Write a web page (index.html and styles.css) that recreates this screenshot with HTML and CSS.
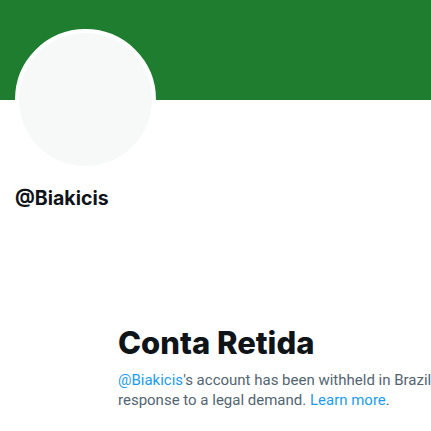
FILE: index.html
```html
<!DOCTYPE html>
<html>
<head>
<meta charset="utf-8">
<link rel="stylesheet" href="styles.css">
</head>
<body>
<div class="page">
  <div class="banner"></div>
  <div class="profile">
    <div class="avatar"><div class="avatar-inner"></div></div>
    <div class="handle">@Biakicis</div>
  </div>
  <div class="withheld">
    <h1 class="title">Conta Retida</h1>
    <p class="message"><a class="link" href="#">@Biakicis</a>'s account has been withheld in Brazil in response to a legal demand. <a class="link" href="#">Learn more</a>.</p>
  </div>
</div>
</body>
</html>
```
FILE: styles.css
```css
html, body {
  margin: 0;
  padding: 0;
  background: #ffffff;
  overflow: hidden;
}
.page {
  width: 431px;
  height: 431px;
  overflow: hidden;
  font-family: Inter, "Liberation Sans", sans-serif;
  color: #0f1419;
}
.banner {
  height: 100px;
  background: #1e7d2e;
}
.profile {
  padding-left: 15px;
}
.avatar {
  width: 141px;
  height: 141px;
  margin-top: -71px;
  box-sizing: border-box;
  border: 4px solid #ffffff;
  border-radius: 50%;
  background: #ffffff;
}
.avatar-inner {
  width: 100%;
  height: 100%;
  border-radius: 50%;
  background: #f7f9f9;
}
.handle {
  margin-top: 16px;
  font-size: 19.5px;
  font-weight: 700;
  line-height: 24px;
}
.withheld {
  margin-left: 118px;
  width: 350px;
  padding-top: 115px;
}
.title {
  margin: 0;
  font-size: 31px;
  font-weight: 800;
  line-height: 36px;
}
.message {
  margin: 9px 0 0;
  font-family: Roboto, "Liberation Sans", sans-serif;
  font-size: 15px;
  line-height: 20px;
  color: #536471;
}
.link {
  color: #1d9bf0;
  text-decoration: none;
}
```
